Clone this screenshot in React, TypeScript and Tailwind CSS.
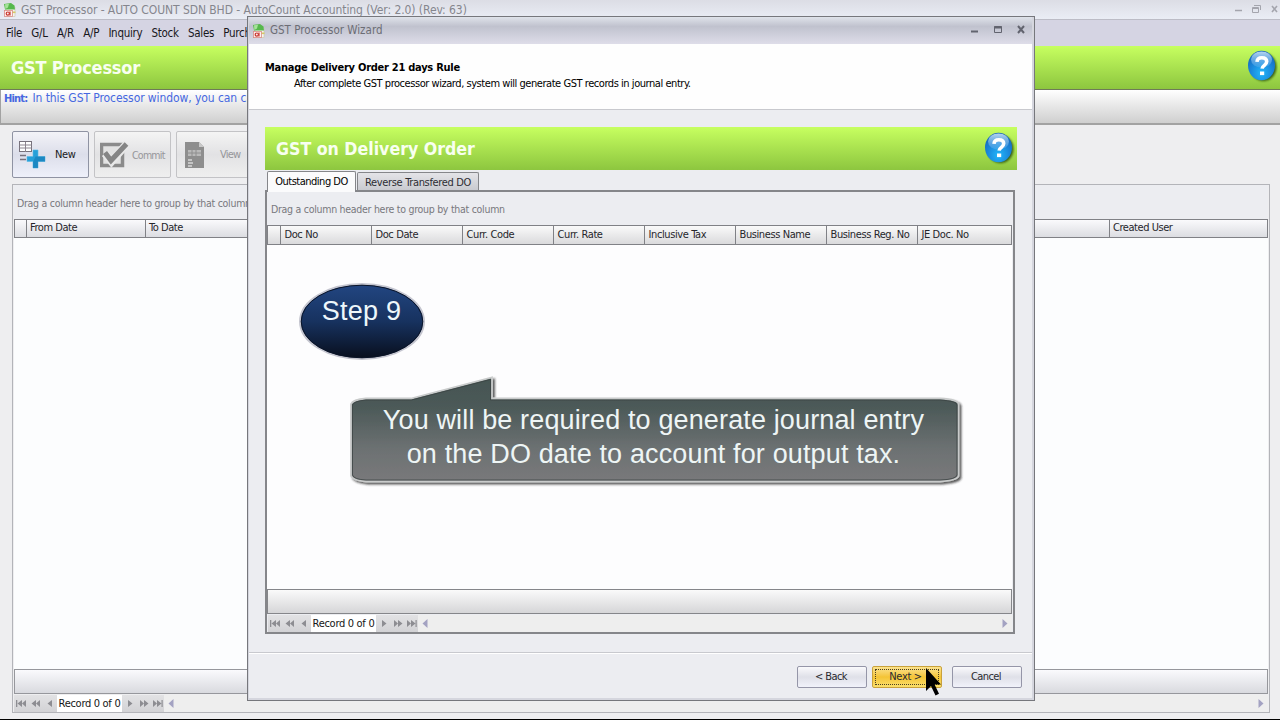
import type { ReactNode } from "react";
import clsx from "clsx";

const menuItems = ["File", "G/L", "A/R", "A/P", "Inquiry", "Stock", "Sales", "Purchase"];

const doColumns = [
  { label: "Doc No", width: "w-[91px]" },
  { label: "Doc Date", width: "w-[91px]" },
  { label: "Curr. Code", width: "w-[91px]" },
  { label: "Curr. Rate", width: "w-[91px]" },
  { label: "Inclusive Tax", width: "w-[91px]" },
  { label: "Business Name", width: "w-[91px]" },
  { label: "Business Reg. No", width: "w-[91px]" },
  { label: "JE Doc. No", width: "flex-1" },
];

function AppIcon() {
  return (
    <svg width="14" height="16" viewBox="0 0 14 16" className="shrink-0">
      <path d="M3 5h9v9.500H3z" fill="#f6f6ee" stroke="#c9c4a8" strokeWidth=".6" />
      <path d="M1 2l7-1 3.500 2.500.5 4H2z" fill="#56b84c" />
      <path d="M2 2.300l4-.6L5 5.500 2.300 7z" fill="#a5e29a" />
      <path d="M8 9.500h4.500v1.600H8z" fill="#d5c964" />
      <rect x="1.400" y="8.400" width="8" height="6.200" fill="#fdf1ee" stroke="#d98d85" strokeWidth=".8" />
      <circle cx="4.800" cy="11.600" r="1.600" fill="none" stroke="#c8352e" strokeWidth="1.200" />
      <path d="M7 9.600v4" stroke="#c8352e" strokeWidth="1.200" />
    </svg>
  );
}

function HelpIcon() {
  return (
    <svg width="31" height="34" viewBox="0 0 31 34" className="shrink-0">
      <defs>
        <radialGradient id="helpBall" cx=".5" cy=".75" r=".75">
          <stop offset="0" stopColor="#22b6fa" />
          <stop offset=".55" stopColor="#1a86da" />
          <stop offset="1" stopColor="#1763b4" />
        </radialGradient>
        <linearGradient id="helpShine" x1="0" y1="0" x2="0" y2="1">
          <stop offset="0" stopColor="#d3e9fb" stopOpacity=".85" />
          <stop offset="1" stopColor="#7fbdf0" stopOpacity=".25" />
        </linearGradient>
        <filter id="helpShadow" x="-20%" y="-20%" width="140%" height="140%">
          <feGaussianBlur stdDeviation="1" />
        </filter>
      </defs>
      <ellipse cx="16.500" cy="18" rx="13" ry="14" fill="#25480f" opacity=".85" filter="url(#helpShadow)" />
      <ellipse cx="14.500" cy="16.500" rx="13.500" ry="14.800" fill="url(#helpBall)" />
      <ellipse cx="14.500" cy="10.500" rx="10.500" ry="8" fill="url(#helpShine)" />
      <path
        d="M10 12.800c.2-2.700 2-4 4.800-4 3 0 4.900 1.400 4.900 3.800 0 3.800-4.300 3.600-4.600 7"
        fill="none"
        stroke="#fff"
        strokeWidth="3.600"
      />
      <rect x="13" y="22.500" width="4.200" height="3.600" fill="#fff" />
    </svg>
  );
}

function NewIcon() {
  return (
    <svg width="28" height="30" viewBox="0 0 28 30">
      <rect x="1.500" y="1.500" width="12" height="10" fill="#fff" stroke="#77727c" />
      <path d="M1.500 5h12M1.500 8h12M7.500 2v10" stroke="#8c858f" />
      <path d="M2 15.500h6M2 19.500h6" stroke="#77727c" strokeWidth="1.300" />
      <path d="M15 10h5v6.500h7v5h-7V28h-5v-6.500H9v-5h6z" fill="#27a0d9" stroke="#58b9e4" strokeWidth=".6" />
      <path d="M17.500 16.500h9.500v5h-7V28h-5v-6z" fill="#1578b4" opacity=".6" />
    </svg>
  );
}

function CommitIcon() {
  return (
    <svg width="30" height="28" viewBox="0 0 30 28">
      <rect x="1.500" y="3.500" width="21" height="21" fill="#e2e2e2" stroke="#8b8b8b" strokeWidth="3.500" />
      <path d="M5 12.500l6.500 8L27 2.500" fill="none" stroke="#e8e8e8" strokeWidth="8" />
      <path d="M5 11.500l6 8L26.500 3" fill="none" stroke="#858585" strokeWidth="5" />
    </svg>
  );
}

function ViewIcon() {
  return (
    <svg width="20" height="28" viewBox="0 0 20 28">
      <path d="M0 1h14l5 5v21H0z" fill="#8e8e8e" />
      <path d="M14 1v5h5z" fill="#c9c9c9" />
      <path d="M3 9h13v6H3z" fill="#b9b9b9" />
      <path d="M3 12h13M7 9v6M11 9v6" stroke="#8e8e8e" />
      <path d="M3 19h4M3 22h5M3 25h4" stroke="#d8d8d8" strokeWidth="1.500" />
    </svg>
  );
}

function Navigator() {
  return (
    <div className="flex h-[17px] w-full items-center">
      <svg width="43" height="17" viewBox="0 0 43 17" className="shrink-0 bg-linear-to-b from-[#e2e2e4] to-[#d2d2d5]">
        <path d="M2 5h1.300v7H2zM8 5v7L3.500 8.500zM12 5v7L8 8.500zM22 5v7l-4.500-3.500zM26 5v7l-4-3.500zM38 5v7l-4.500-3.500z" fill="#8d8d92" />
      </svg>
      <div className="h-full w-[65px] shrink-0 bg-white text-center text-[11px] leading-[17px] tracking-[-0.300px] text-[#161616]">
        Record 0 of 0
      </div>
      <svg width="42" height="17" viewBox="0 0 42 17" className="shrink-0 bg-linear-to-b from-[#e2e2e4] to-[#d2d2d5]">
        <path d="M6 5v7l4.500-3.500zM18 5v7l4-3.500zM22 5v7l4.500-3.500zM31 5v7l4-3.500zM35 5v7l4.500-3.500zM39.500 5h1.200v7h-1.200z" fill="#8d8d92" />
      </svg>
      <div className="flex h-full flex-1 items-center justify-between bg-[#eeeeee] pr-[4px] pl-[4px]">
        <svg width="6" height="9" viewBox="0 0 6 9">
          <path d="M5.500 0v9L.5 4.500z" fill="#a3a2c2" />
        </svg>
        <svg width="6" height="9" viewBox="0 0 6 9">
          <path d="M.5 0v9l5-4.500z" fill="#a3a2c2" />
        </svg>
      </div>
    </div>
  );
}

function ToolButton({ children, active = false }: { children: ReactNode; active?: boolean }) {
  return (
    <div
      className={clsx(
        "flex h-[47px] w-[77px] shrink-0 items-center rounded-[2px] border pl-[5px] text-[11px]",
        active
          ? "border-[#8f93a3] bg-linear-to-b from-[#f3f3f8] via-[#dcdeea] to-[#eef0fa] text-[#1a1a22]"
          : "border-[#c3c3c6] bg-linear-to-b from-[#f4f4f4] via-[#e2e2e4] to-[#efefef] text-[#96969a]"
      )}
    >
      {children}
    </div>
  );
}

function WizardButton({ label, focused = false }: { label: string; focused?: boolean }) {
  return (
    <button
      className={clsx(
        "h-[22px] w-[70px] rounded-[2px] border p-[2px] text-[11px] leading-[14px] tracking-[-0.600px] text-[#2a2a30]",
        focused
          ? "border-[#c9a23c] bg-linear-to-b from-[#fbe38b] via-[#f4c434] to-[#fbe06a]"
          : "border-[#9596a8] bg-linear-to-b from-[#fafafc] via-[#dfe0e8] to-[#f1f2fa]"
      )}
    >
      <span
        className={clsx(
          "flex h-full items-center justify-center border border-dotted",
          focused ? "border-[#4a4022] pr-[3px] tracking-[-0.350px]" : "border-transparent pr-[2px]"
        )}
      >
        {label}
      </span>
    </button>
  );
}

function MainWindow() {
  return (
    <div className="flex h-[720px] w-[1280px] flex-col bg-[#eeeef0]">
      <div className="flex h-[19px] shrink-0 items-center bg-linear-to-b from-[#dcdde5] to-[#eaedf5] pl-[3px]">
        <AppIcon />
        <span className="ml-[4px] text-[12px] leading-[18px] tracking-[-0.070px] text-[#85868d]">
          GST Processor - AUTO COUNT SDN BHD - AutoCount Accounting (Ver: 2.0) (Rev: 63)
        </span>
        <svg width="46" height="12" viewBox="0 0 46 12" className="mb-[2px] ml-auto" fill="none" stroke="#a4a5ad">
          <path d="M1 7.500h7" strokeWidth="1.500" />
          <path d="M18.500 4.500h6v5h-6zM20 2.500h6.500V7M18.500 5.500h6" />
          <path d="M38 3l5 6M43 3l-5 6" strokeWidth="1.600" />
        </svg>
      </div>
      <div className="flex h-[27px] shrink-0 items-center gap-[9.300px] border-t border-[#bcbcc6] bg-[#d5d4e3] pt-px pl-[6px] text-[11.500px] tracking-[-0.300px] text-[#17171c]">
        {menuItems.map((item) => (
          <span key={item}>{item}</span>
        ))}
      </div>
      <div className="flex h-[44px] shrink-0 items-center justify-between border-b border-[#6f7a58] bg-linear-to-b from-[#c7ff60] to-[#8dc63f] pr-[2px] pl-[11px]">
        <span className="text-[18px] font-bold tracking-[-0.200px] text-[#f8fff0]">GST Processor</span>
        <div className="mt-[-3px]">
          <HelpIcon />
        </div>
      </div>
      <div className="h-[35px] shrink-0 border-b-2 border-l border-[#a2a2a2] bg-linear-to-b from-white to-[#cfcfcf] pl-[3px] text-[12px] leading-[16px] tracking-[-0.080px] text-[#4668e0]">
        <span className="mr-[5px] text-[11px] font-bold tracking-[-0.800px]">Hint:</span>
        In this GST Processor window, you can create
      </div>
      <div className="flex min-h-0 flex-1 flex-col border-b border-black px-[12px] pt-[6px] pb-[6px]">
        <div className="flex gap-[5px]">
          <ToolButton active>
            <NewIcon />
            <span className="mt-[2px] ml-[9px] tracking-[-0.400px]">New</span>
          </ToolButton>
          <ToolButton>
            <CommitIcon />
            <span className="mt-[2px] ml-[2px] text-[10.500px] tracking-[-0.750px]">Commit</span>
          </ToolButton>
          <ToolButton>
            <span className="ml-[3px]">
              <ViewIcon />
            </span>
            <span className="mt-[2px] ml-[15px] tracking-[-0.800px]">View</span>
          </ToolButton>
        </div>
        <div className="mt-[6px] mr-[-2px] flex min-h-0 flex-1 flex-col border border-[#b3b4b9] pr-px pl-px">
          <div className="flex h-[34px] shrink-0 items-center bg-[#ecedf1] pt-[3px] pl-[3px] text-[10.500px] tracking-[-0.280px] text-[#78787d]">
            Drag a column header here to group by that column
          </div>
          <div className="flex h-[19px] shrink-0 border border-[#808186] bg-linear-to-b from-[#fafafc] to-[#dcdde2] text-[11px] leading-[16px] tracking-[-0.450px] text-[#26262b]">
            <div className="w-[12px] border-r border-[#808186]" />
            <div className="w-[119px] border-r border-[#808186] pl-[3px]">From Date</div>
            <div className="flex-1 border-r border-[#808186] pl-[3px]">To Date</div>
            <div className="w-[157px] pl-[3px]">Created User</div>
          </div>
          <div className="flex-1 bg-[#fcfdfe]" />
          <div className="mb-px h-[25px] shrink-0 border border-[#96979c] bg-linear-to-b from-[#fafafd] to-[#d9dadf]" />
          <Navigator />
        </div>
      </div>
    </div>
  );
}

function OrderGrid() {
  return (
    <div className="flex h-[444px] w-[750px] flex-col border-2 border-[#85868a] bg-[#ecedf1] pr-px">
      <div className="flex h-[33px] shrink-0 items-center pt-[3px] pl-[4px] text-[10.500px] tracking-[-0.280px] text-[#78787d]">
        Drag a column header here to group by that column
      </div>
      <div className="flex h-[20px] shrink-0 border border-[#808186] bg-linear-to-b from-[#fafafa] to-[#dadadc] text-[11px] leading-[18px] tracking-[-0.400px] whitespace-nowrap text-[#26262b]">
        <div className="w-[13px] border-r border-[#808186]" />
        {doColumns.map((column) => (
          <div key={column.label} className={clsx("border-r border-[#808186] pl-[3.500px] last:border-r-0", column.width)}>
            {column.label}
          </div>
        ))}
      </div>
      <div className="flex-1 bg-[#fdfdfe]" />
      <div className="mb-px h-[25px] shrink-0 border border-[#85868a] bg-linear-to-b from-[#fafafa] to-[#d6d6d8]" />
      <div className="pl-px">
        <Navigator />
      </div>
    </div>
  );
}

function WizardDialog() {
  return (
    <div className="absolute top-[16px] left-[247px] flex h-[685px] w-[788px] flex-col border border-[#76777c] bg-[#d5d6de] pr-[2px] pb-[2px] pl-px">
      <div className="flex h-[27px] shrink-0 items-center bg-linear-to-b from-[#dfe3ea] via-[#c0c2ce] via-35% to-[#dedde9] pr-[5px] pl-[3px]">
        <AppIcon />
        <span className="mt-px ml-[4px] text-[11.500px] tracking-[0px] text-[#6c6d75]">GST Processor Wizard</span>
        <svg width="58" height="12" viewBox="0 0 58 12" className="mb-px ml-auto" fill="none" stroke="#62646f">
          <path d="M2 7.500h7" strokeWidth="2" />
          <path d="M25.500 2.500h7v6h-7z" />
          <path d="M25 3.500h8" strokeWidth="2" />
          <path d="M49 2l6 7M55 2l-6 7" strokeWidth="2" />
        </svg>
      </div>
      <div className="h-[66px] shrink-0 border-b border-[#c8c9ce] bg-[#fefefe] pt-[16px] pl-[16px] text-[11px] text-black">
        <p className="leading-[16px] font-bold tracking-[-0.260px]">Manage Delivery Order 21 days Rule</p>
        <p className="pl-[29px] leading-[16px] tracking-[-0.450px]">
          After complete GST processor wizard, system will generate GST records in journal entry.
        </p>
      </div>
      <div className="flex h-[543px] shrink-0 flex-col border-b border-[#c8c9ce] bg-[#ecedf1] pt-[17px] pl-[16px]">
        <div className="flex h-[43px] w-[752px] shrink-0 items-center justify-between bg-linear-to-b from-[#c7ff60] to-[#8dc63f] pr-[2px] pl-[11px]">
          <span className="mt-px text-[17.600px] font-bold text-[#f8fff0]">GST on Delivery Order</span>
          <div className="mt-[-1px]">
            <HelpIcon />
          </div>
        </div>
        <div className="flex h-[20px] shrink-0 items-end gap-[1px] pl-[2px] text-[11px]">
          <div className="z-10 mb-[-2px] h-[21px] w-[89px] rounded-t-[2px] border border-b-0 border-[#85868a] bg-[#fbfbfc] text-center leading-[19px] tracking-[-0.500px] text-black">
            Outstanding DO
          </div>
          <div className="h-[18px] w-[122px] rounded-t-[2px] border border-b-0 border-[#85868a] bg-linear-to-b from-[#e4e4e8] to-[#c9cad0] pt-px text-center leading-[18px] tracking-[-0.350px] text-[#2d2d33]">
            Reverse Transfered DO
          </div>
        </div>
        <OrderGrid />
      </div>
      <div className="flex flex-1 justify-end border-t border-white bg-[#ecedf1] pt-[12px] pr-[10px]">
        <div className="mr-[10px] flex gap-[5px]">
          <WizardButton label="< Back" />
          <WizardButton label="Next >" focused />
        </div>
        <WizardButton label="Cancel" />
      </div>
    </div>
  );
}

function StepBadge() {
  return (
    <div className="absolute top-[281px] left-[298px] h-[80px] w-[128px]">
      <svg width="128" height="80" viewBox="0 0 128 80" className="absolute inset-0">
        <defs>
          <linearGradient id="badgeFill" x1="0" y1="0" x2="0" y2="1">
            <stop offset="0" stopColor="#224682" />
            <stop offset=".5" stopColor="#17325f" />
            <stop offset="1" stopColor="#080e1c" />
          </linearGradient>
        </defs>
        <ellipse cx="64" cy="40.500" rx="62" ry="37.500" fill="url(#badgeFill)" stroke="#c4c5cf" strokeWidth="2" />
        <ellipse cx="64" cy="40.500" rx="60.800" ry="36.300" fill="none" stroke="#0a1428" />
      </svg>
      <p className="relative pt-[13px] pr-px text-center font-['Liberation_Sans',sans-serif] text-[27px] leading-[34px] tracking-[0.200px] text-[#eef7fb]">
        Step 9
      </p>
    </div>
  );
}

function Callout() {
  return (
    <div className="absolute top-[374px] left-[344px] h-[116px] w-[622px]">
      <svg width="622" height="116" viewBox="0 0 622 116" className="absolute inset-0">
        <defs>
          <linearGradient id="calloutFill" x1="0" y1="0" x2="0" y2="1">
            <stop offset="0" stopColor="#445552" />
            <stop offset=".3" stopColor="#4d5a59" />
            <stop offset=".68" stopColor="#6c7172" />
            <stop offset="1" stopColor="#79797b" />
          </linearGradient>
          <filter id="calloutShadow" x="-2%" y="-10%" width="104%" height="120%">
            <feDropShadow dx="2" dy="2" stdDeviation="1.200" floodColor="#222" floodOpacity=".75" />
          </filter>
        </defs>
        <path
          d="M22 24.500H67L148 3.500V24.500H596Q614 25.500 614.500 30V102Q613 106.500 596 107.500H22Q9 106.500 7 102V30Q9 25.500 22 24.500Z"
          fill="url(#calloutFill)"
          stroke="#c9cbcb"
          strokeWidth="1.800"
          filter="url(#calloutShadow)"
        />
        <path
          d="M22 26H67.500L146.500 5.500V26H596Q613 27 613 31V101Q612 105.500 596 106H22Q10 105.500 8.500 101V31Q10 27 22 26Z"
          fill="none"
          stroke="#3c4444"
          strokeWidth=".8"
        />
      </svg>
      <p className="relative pt-[29px] pr-[3px] text-center font-['Liberation_Sans',sans-serif] text-[27px] leading-[34px] tracking-[0.140px] text-[#eef5f5]">
        You will be required to generate journal entry
        <br />
        on the DO date to account for output tax.
      </p>
    </div>
  );
}

function Cursor() {
  return (
    <svg width="18" height="30" viewBox="0 0 18 30" className="absolute top-[667px] left-[925px]">
      <path d="M1 1v23l5-5 4.500 9.500 3.500-1.700L9.600 17.500H16z" fill="#000" />
    </svg>
  );
}

export default function App() {
  return (
    <div className="relative h-[720px] w-[1280px] overflow-hidden font-['DejaVu_Sans_Condensed','DejaVu_Sans',sans-serif] whitespace-nowrap">
      <MainWindow />
      <WizardDialog />
      <StepBadge />
      <Callout />
      <Cursor />
    </div>
  );
}
